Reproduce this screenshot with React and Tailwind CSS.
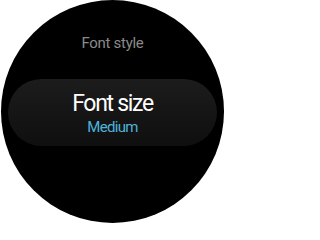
export default function App() {
  return (
    <div className="w-[225px] h-[225px] bg-white overflow-hidden relative" style={{ fontFamily: "Roboto, 'Noto Sans', sans-serif" }}>
      <div className="ml-[1px] w-[223px] h-[223px] rounded-full bg-black overflow-hidden flex flex-col items-center">
        <div className="mt-[34px] text-[15px] leading-[18px] text-[#8a8a8a] tracking-[-0.3px]">Font style</div>
        <div className="mt-[27px] w-[209px] h-[67px] shrink-0 rounded-[34px] bg-gradient-to-b from-[#1c1c1c] to-[#0f0f0f] flex flex-col items-center">
          <div className="mt-[11px] text-[23px] leading-[28px] text-white tracking-[-1.3px]">Font size</div>
          <div className="mt-[0px] text-[15px] leading-[18px] text-[#4db3dc] tracking-[-0.7px]">Medium</div>
        </div>
      </div>
    </div>
  );
}
